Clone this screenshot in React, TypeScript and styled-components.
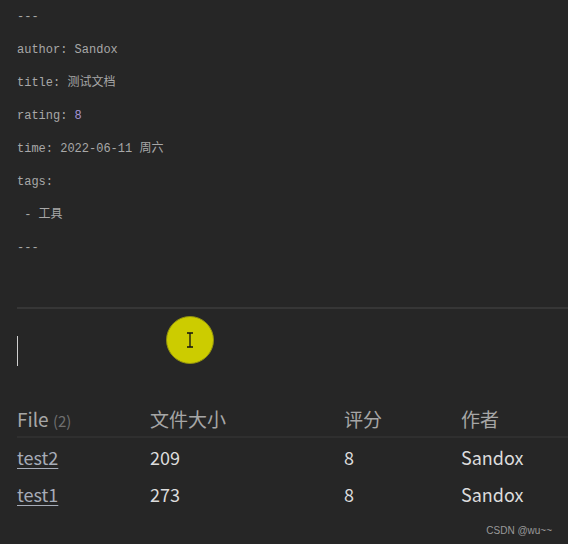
import styled, { createGlobalStyle } from "styled-components";

const Global = createGlobalStyle`
  html, body { margin: 0; padding: 0; background: #262626; }
  body { width: 568px; height: 544px; overflow: hidden; }
`;

const Page = styled.div`
  position: relative;
  width: 568px;
  height: 544px;
  background: #262626;
  padding-left: 17px;
  box-sizing: border-box;
`;

const Front = styled.div`
  padding-top: 9px;
  font-family: "Liberation Mono", "Noto Sans CJK SC", monospace;
  font-size: 12px;
  color: #a8a8a8;
`;

const Line = styled.div`
  height: 33px;
  line-height: 16px;
  white-space: pre;
`;

const Num = styled.span`
  color: #a594d6;
`;

const Rule = styled.div`
  margin-top: 34px;
  height: 2px;
  background: #363636;
`;

const Editor = styled.div`
  position: relative;
  height: 87px;
`;

const Caret = styled.div`
  position: absolute;
  left: 0;
  top: 27px;
  width: 1px;
  height: 30px;
  background: #cfcfcf;
`;

const Pointer = styled.div`
  position: absolute;
  left: 149px;
  top: 7px;
  width: 46px;
  height: 46px;
  border-radius: 50%;
  background: #cccc00;
  border: 1px solid #8f8f10;
  display: flex;
  align-items: center;
  justify-content: center;
`;

const Table = styled.div`
  font-family: "Noto Sans CJK SC", "Noto Sans", sans-serif;
`;

const Row = styled.div<{ $head?: boolean }>`
  display: grid;
  grid-template-columns: 133px 194px 117px 1fr;
  box-sizing: border-box;
  height: ${(p) => (p.$head ? "42px" : "37px")};
  padding-top: ${(p) => (p.$head ? "4px" : "0")};
  align-items: center;
  font-size: ${(p) => (p.$head ? "19px" : "18px")};
  color: ${(p) => (p.$head ? "#a6a6a6" : "#dcdcdc")};
  border-bottom: ${(p) => (p.$head ? "2px solid #2f2f2f" : "none")};
`;

const Count = styled.span`
  font-size: 15px;
  color: #6f6f6f;
`;

const Link = styled.a`
  color: #a6acb8;
  text-decoration: underline;
  text-underline-offset: 3px;
`;

const Mark = styled.div`
  position: absolute;
  right: 16px;
  bottom: 8px;
  font-family: "Liberation Sans", sans-serif;
  font-size: 10px;
  color: #9a9a9a;
`;

const rows = [
  { file: "test2", size: 209, rating: 8, author: "Sandox" },
  { file: "test1", size: 273, rating: 8, author: "Sandox" },
];

export default function App() {
  return (
    <Page>
      <Global />
      <Front>
        <Line>---</Line>
        <Line>author: Sandox</Line>
        <Line>title: 测试文档</Line>
        <Line>
          rating: <Num>8</Num>
        </Line>
        <Line>time: 2022-06-11 周六</Line>
        <Line>tags:</Line>
        <Line> - 工具</Line>
        <Line>---</Line>
      </Front>
      <Rule />
      <Editor>
        <Caret />
        <Pointer>
          <svg width="8" height="16" viewBox="0 0 8 16">
            <path d="M1 1h6M4 1v14M1 15h6" stroke="#111" strokeWidth="1.3" fill="none" />
          </svg>
        </Pointer>
      </Editor>
      <Table>
        <Row $head>
          <span>
            File <Count>(2)</Count>
          </span>
          <span>文件大小</span>
          <span>评分</span>
          <span>作者</span>
        </Row>
        {rows.map((r) => (
          <Row key={r.file}>
            <span>
              <Link>{r.file}</Link>
            </span>
            <span>{r.size}</span>
            <span>{r.rating}</span>
            <span>{r.author}</span>
          </Row>
        ))}
      </Table>
      <Mark>CSDN @wu~~</Mark>
    </Page>
  );
}
